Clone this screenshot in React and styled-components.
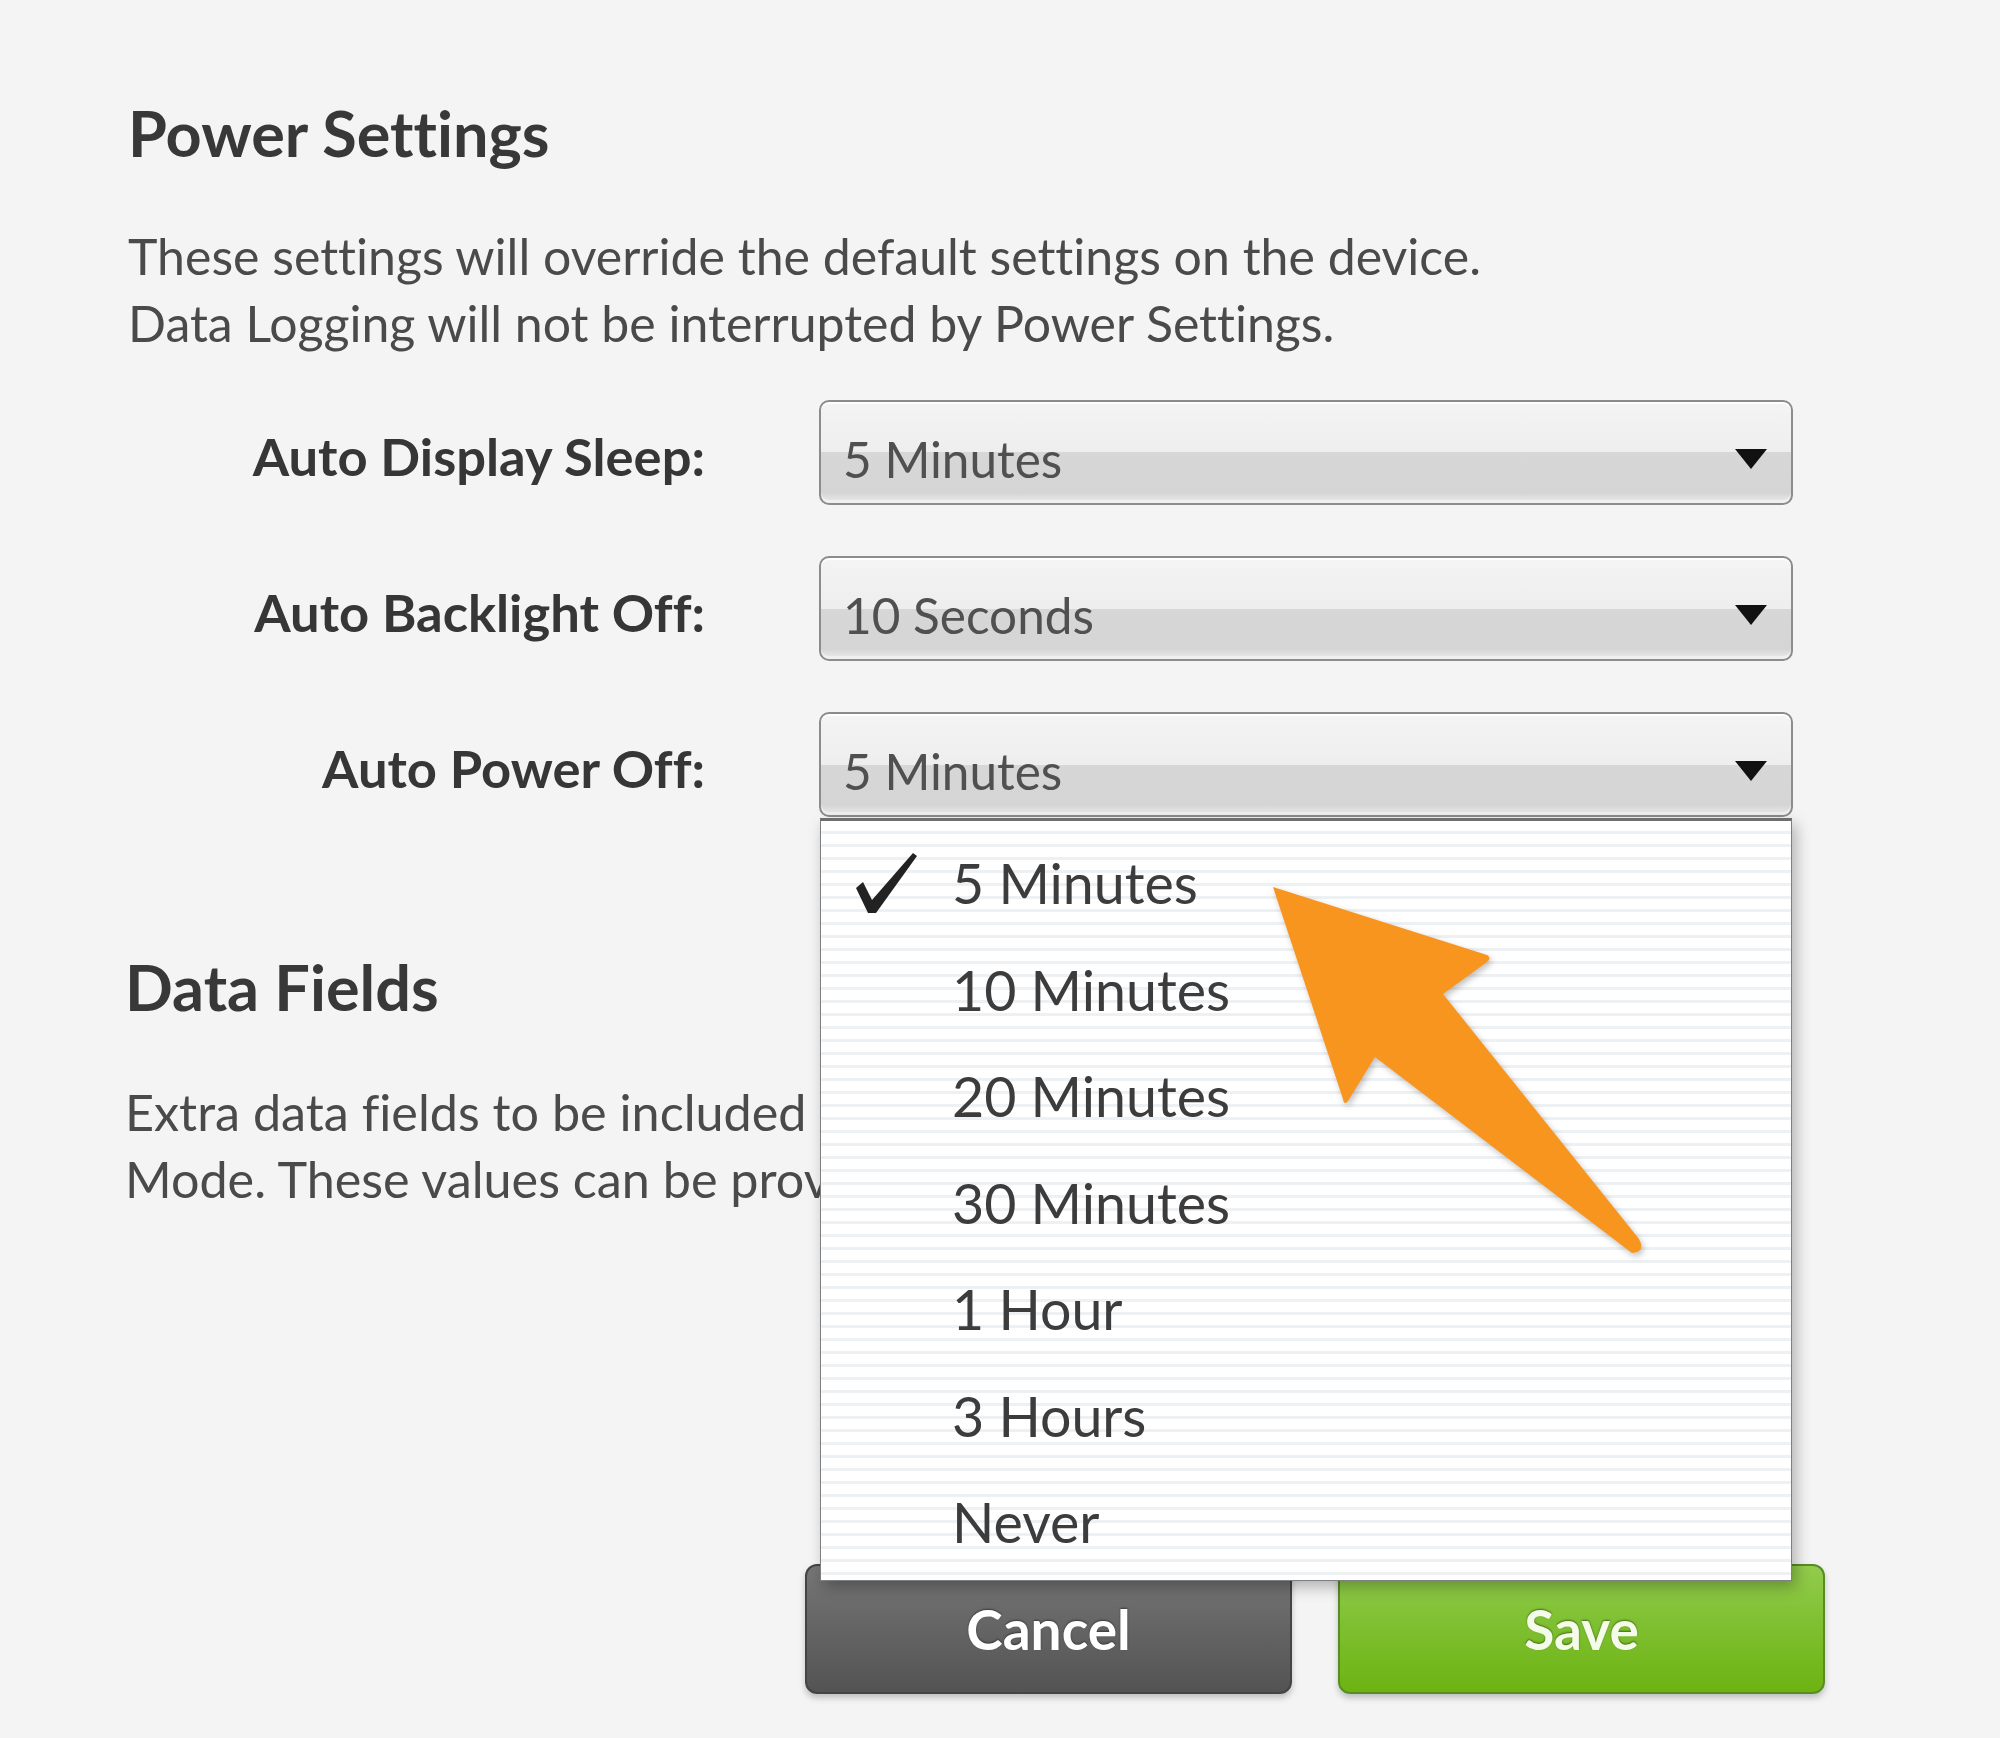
import React from "react";
import styled, { createGlobalStyle } from "styled-components";

const GlobalStyle = createGlobalStyle`
  html, body {
    margin: 0;
    padding: 0;
    background: #f4f4f4;
  }
  body {
    font-family: Lato, "Open Sans", sans-serif;
    font-variant-ligatures: none;
    color: #3a3a3a;
  }
`

const Page = styled.div`
  position: relative;
  width: 2000px;
  min-height: 1738px;
  box-sizing: border-box;
  padding: 97px 0 0 128px;
`

const Heading = styled.h2`
  margin: ${p => p.$top || 0}px 0 0 ${p => p.$shift || 0}px;
  font-size: 63px;
  line-height: 72px;
  font-weight: 700;
  color: #383838;
`

const Description = styled.p`
  margin: ${p => p.$top || 54}px 0 0 ${p => p.$shift || 0}px;
  font-size: ${p => p.$size || 50}px;
  line-height: 67px;
  color: #4a4a4a;
  white-space: nowrap;
`

const Form = styled.div`
  display: grid;
  grid-template-columns: 577px 974px;
  column-gap: 114px;
  row-gap: 51px;
  margin-top: 43px;
`

const Label = styled.div`
  text-align: right;
  font-size: 52.5px;
  font-weight: 700;
  line-height: 98px;
  padding-top: 7px;
  color: #363636;
  white-space: nowrap;
`

const SelectWrap = styled.div`
  position: relative;
`

const Select = styled.div`
  display: flex;
  align-items: center;
  justify-content: space-between;
  box-sizing: border-box;
  height: 105px;
  padding: 14px 24px 0 22px;
  border: 2px solid #8c8c8c;
  border-radius: 10px;
  background: linear-gradient(
    to bottom,
    #f4f4f4 0%,
    #eeeeee 50%,
    #d7d7d7 50%,
    #d5d5d5 90%,
    #ececec 100%
  );
  box-shadow: inset 0 2px 0 #ffffff, inset 0 -3px 0 #f0f0f0;
  font-size: 49.5px;
  line-height: 1.2;
  color: #505050;
`

const Caret = styled.span`
  width: 0;
  height: 0;
  margin-top: -2px;
  border-left: 16px solid transparent;
  border-right: 16px solid transparent;
  border-top: 20px solid #111;
`

const Menu = styled.ul`
  position: absolute;
  z-index: 10;
  top: calc(100% + 1px);
  left: 1px;
  width: 972px;
  box-sizing: border-box;
  margin: 0;
  padding: 9px 0 4px 0;
  list-style: none;
  border: 1px solid #7f7f7f;
  border-top: 3px solid #6e6e6e;
  background: repeating-linear-gradient(
    to bottom,
    #ffffff 0px,
    #ffffff 10px,
    #eef1f4 10px,
    #eef1f4 13px
  );
  box-shadow: 4px 6px 14px rgba(0, 0, 0, 0.28);
`

const MenuItem = styled.li`
  display: flex;
  align-items: center;
  height: 106.5px;
  font-size: 55.5px;
  line-height: 106.5px;
  color: #3c3c3c;
`

const CheckCell = styled.span`
  display: flex;
  align-items: center;
  justify-content: flex-start;
  width: 131px;
  padding-left: 30px;
  box-sizing: border-box;
`

const ButtonRow = styled.div`
  display: flex;
  gap: 46px;
  margin: 352px 0 0 677px;
`

const Button = styled.button`
  width: 487px;
  height: 130px;
  border-radius: 12px;
  font-family: Lato, "Open Sans", sans-serif;
  font-size: 55px;
  font-weight: 700;
  cursor: pointer;
  border: 2px solid ${p => (p.$primary ? "#5a8c26" : "#444444")};
  color: ${p => (p.$primary ? "#f4fbe8" : "#ffffff")};
  background: ${p =>
    p.$primary
      ? "linear-gradient(to bottom, #93cc4c 0%, #7fc032 45%, #6db312 100%)"
      : "linear-gradient(to bottom, #767676 0%, #666666 45%, #535353 100%)"};
  text-shadow: 0 -1px 2px rgba(0, 0, 0, 0.45);
  box-shadow: 0 4px 6px rgba(0, 0, 0, 0.22);
`

const Pointer = styled.svg`
  position: absolute;
  z-index: 20;
  left: 1250px;
  top: 860px;
  width: 420px;
  height: 420px;
  filter: drop-shadow(2px 3px 3px rgba(0, 0, 0, 0.25));
`

const Check = () => (
  <svg width="66" height="62" viewBox="850 848 66 62">
    <path d="M855 884 L862 878 L871 896 L912 849 L916 852 L875 909 L867 909 Z" fill="#222" />
  </svg>
)

const options = ["5 Minutes", "10 Minutes", "20 Minutes", "30 Minutes", "1 Hour", "3 Hours", "Never"]

const rows = [
  { label: "Auto Display Sleep:", value: "5 Minutes" },
  { label: "Auto Backlight Off:", value: "10 Seconds" },
  { label: "Auto Power Off:", value: "5 Minutes", open: true },
]

const App = () => (
  <Page>
    <GlobalStyle />
    <Heading>Power Settings</Heading>
    <Description>
      These settings will override the default settings on the device.
      <br />
      Data Logging will not be interrupted by Power Settings.
    </Description>

    <Form>
      {rows.map(row => (
        <React.Fragment key={row.label}>
          <Label>{row.label}</Label>
          <SelectWrap>
            <Select>
              <span>{row.value}</span>
              <Caret />
            </Select>
            {row.open && (
              <Menu>
                {options.map(opt => (
                  <MenuItem key={opt}>
                    <CheckCell>{opt === row.value && <Check />}</CheckCell>
                    {opt}
                  </MenuItem>
                ))}
              </Menu>
            )}
          </SelectWrap>
        </React.Fragment>
      ))}
    </Form>

    <Heading $top={134} $shift={-3}>Data Fields</Heading>
    <Description $top={55} $shift={-3} $size={50.3}>
      Extra data fields to be included in the log file when in Logging
      <br />
      Mode. These values can be provided by the user at setup.
    </Description>

    <ButtonRow>
      <Button>Cancel</Button>
      <Button $primary>Save</Button>
    </ButtonRow>

    <Pointer viewBox="1250 860 420 420">
      <path
        d="M1273 887 L1487 955 Q1492 958 1487 962 L1443 994 L1639 1239 Q1646 1252 1632 1253 L1375 1057 L1348 1101 Q1344 1106 1343 1099 Z"
        fill="#f7951f"
      />
    </Pointer>
  </Page>
)

export default App
